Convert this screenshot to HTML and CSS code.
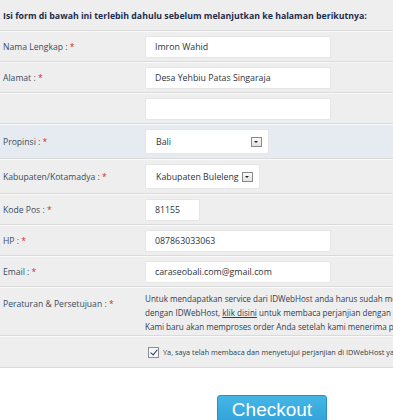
FILE: index.html
```html
<!DOCTYPE html>
<html lang="id">
<head>
  <meta charset="UTF-8">
  <title>Form Order</title>
  <link rel="stylesheet" href="styles.css">
</head>
<body>
  <div class="page">
    <div class="form">
      <h3 class="intro">Isi form di bawah ini terlebih dahulu sebelum melanjutkan ke halaman berikutnya:</h3>

      <div class="row">
        <label>Nama Lengkap : <span class="req">*</span></label>
        <div class="field"><div class="input wide">Imron Wahid</div></div>
      </div>
      <div class="row">
        <label>Alamat : <span class="req">*</span></label>
        <div class="field"><div class="input wide">Desa Yehbiu Patas Singaraja</div></div>
      </div>
      <div class="row">
        <label></label>
        <div class="field"><div class="input wide"></div></div>
      </div>
      <div class="row row-tall hilite">
        <label>Propinsi : <span class="req">*</span></label>
        <div class="field"><div class="select prov"><span>Bali</span><i class="arrow"></i></div></div>
      </div>
      <div class="row row-tall">
        <label>Kabupaten/Kotamadya : <span class="req">*</span></label>
        <div class="field"><div class="select kab"><span>Kabupaten Buleleng</span><i class="arrow"></i></div></div>
      </div>
      <div class="row">
        <label>Kode Pos : <span class="req">*</span></label>
        <div class="field"><div class="input short">81155</div></div>
      </div>
      <div class="row">
        <label>HP : <span class="req">*</span></label>
        <div class="field"><div class="input wide">087863033063</div></div>
      </div>
      <div class="row">
        <label>Email : <span class="req">*</span></label>
        <div class="field"><div class="input wide">caraseobali.com@gmail.com</div></div>
      </div>
      <div class="row row-terms">
        <label>Peraturan &amp; Persetujuan : <span class="req">*</span></label>
        <div class="terms">
          Untuk mendapatkan service dari IDWebHost anda harus sudah membaca dan menyetujui perjanjian<br>
          dengan IDWebHost, <a href="#">klik disini</a> untuk membaca perjanjian dengan IDWebHost.<br>
          Kami baru akan memproses order Anda setelah kami menerima perjanjian tersebut.
        </div>
      </div>
      <div class="row row-check">
        <label></label>
        <div class="agree"><span class="check"></span>Ya, saya telah membaca dan menyetujui perjanjian di IDWebHost yang berlaku.</div>
      </div>
    </div>
    <div class="actions">
      <button class="checkout">Checkout</button>
    </div>
  </div>
</body>
</html>
```

FILE: styles.css
```css
body {
  margin: 0;
  background: #ffffff;
  font-family: "Open Sans", "DejaVu Sans", sans-serif;
  overflow: hidden;
}
.page {
  width: 620px;
}
.form {
  background: #eeeeee;
}
.intro {
  margin: 0;
  padding: 10px 3px 8px;
  font-size: 8.75px;
  font-weight: 700;
  color: #1d2d4c;
  border-bottom: 1px solid #dadada;
}
.row {
  display: grid;
  grid-template-columns: 145px 1fr;
  align-items: center;
  height: 29px;
  border-top: 1px solid #fafafa;
  border-bottom: 1px solid #dadada;
}
.row label {
  padding-left: 3px;
  font-size: 8.6px;
  color: #3a4c60;
}
.req {
  color: #e0262e;
}
.row-tall {
  height: 33px;
}
.hilite {
  background: #e5ebf1;
}
.field {
  display: flex;
  align-items: center;
}
.input {
  height: 22px;
  box-sizing: border-box;
  background: #ffffff;
  border: 1px solid #e6e6e6;
  border-radius: 2px;
  padding: 0 9px;
  font-size: 8.8px;
  color: #2b3440;
  line-height: 20px;
}
.input.wide {
  width: 186px;
}
.input.short {
  width: 55px;
}
.select {
  height: 25px;
  box-sizing: border-box;
  background: #ffffff;
  border: 1px solid #e6e6e6;
  border-radius: 2px;
  padding: 0 6px 0 10px;
  display: flex;
  align-items: center;
  justify-content: space-between;
  font-size: 8.8px;
  color: #2b3440;
}
.select.prov {
  width: 124px;
}
.select.kab {
  width: 115px;
}
.arrow {
  width: 11px;
  height: 10px;
  box-sizing: border-box;
  border: 1px solid #8a8a8a;
  background: linear-gradient(#fafafa, #e2e2e2);
  position: relative;
}
.arrow::after {
  content: "";
  position: absolute;
  left: 2px;
  top: 3px;
  border-left: 2.5px solid transparent;
  border-right: 2.5px solid transparent;
  border-top: 2.5px solid #222;
}
.row-terms {
  height: 47px;
  align-items: start;
}
.row-terms label {
  padding-top: 10px;
}
.terms {
  padding-top: 4px;
  font-size: 8.1px;
  line-height: 14px;
  color: #2f3d4c;
  white-space: nowrap;
}
.terms a {
  color: #2f3d4c;
}
.row-check {
  height: 30px;
}
.agree {
  display: flex;
  align-items: center;
  gap: 4px;
  padding-left: 3px;
  font-size: 7.3px;
  color: #2f3d4c;
  white-space: nowrap;
}
.check {
  width: 11px;
  height: 11px;
  box-sizing: border-box;
  border: 1px solid #8d8d8d;
  background: #f4f6f8;
  position: relative;
}
.check::after {
  content: "";
  position: absolute;
  left: 3px;
  top: 0;
  width: 3px;
  height: 6px;
  border-right: 1.5px solid #1f3a7a;
  border-bottom: 1.5px solid #1f3a7a;
  transform: rotate(40deg);
}
.actions {
  padding: 27px 0 0 217px;
}
.checkout {
  width: 110px;
  height: 34px;
  border: 1px solid #2a8fc3;
  border-radius: 3px;
  background: linear-gradient(#44b6e6, #2f9ed5);
  color: #ffffff;
  font-family: "Liberation Sans", Arial, sans-serif;
  font-size: 19px;
  padding: 0 0 4px;
}
```
